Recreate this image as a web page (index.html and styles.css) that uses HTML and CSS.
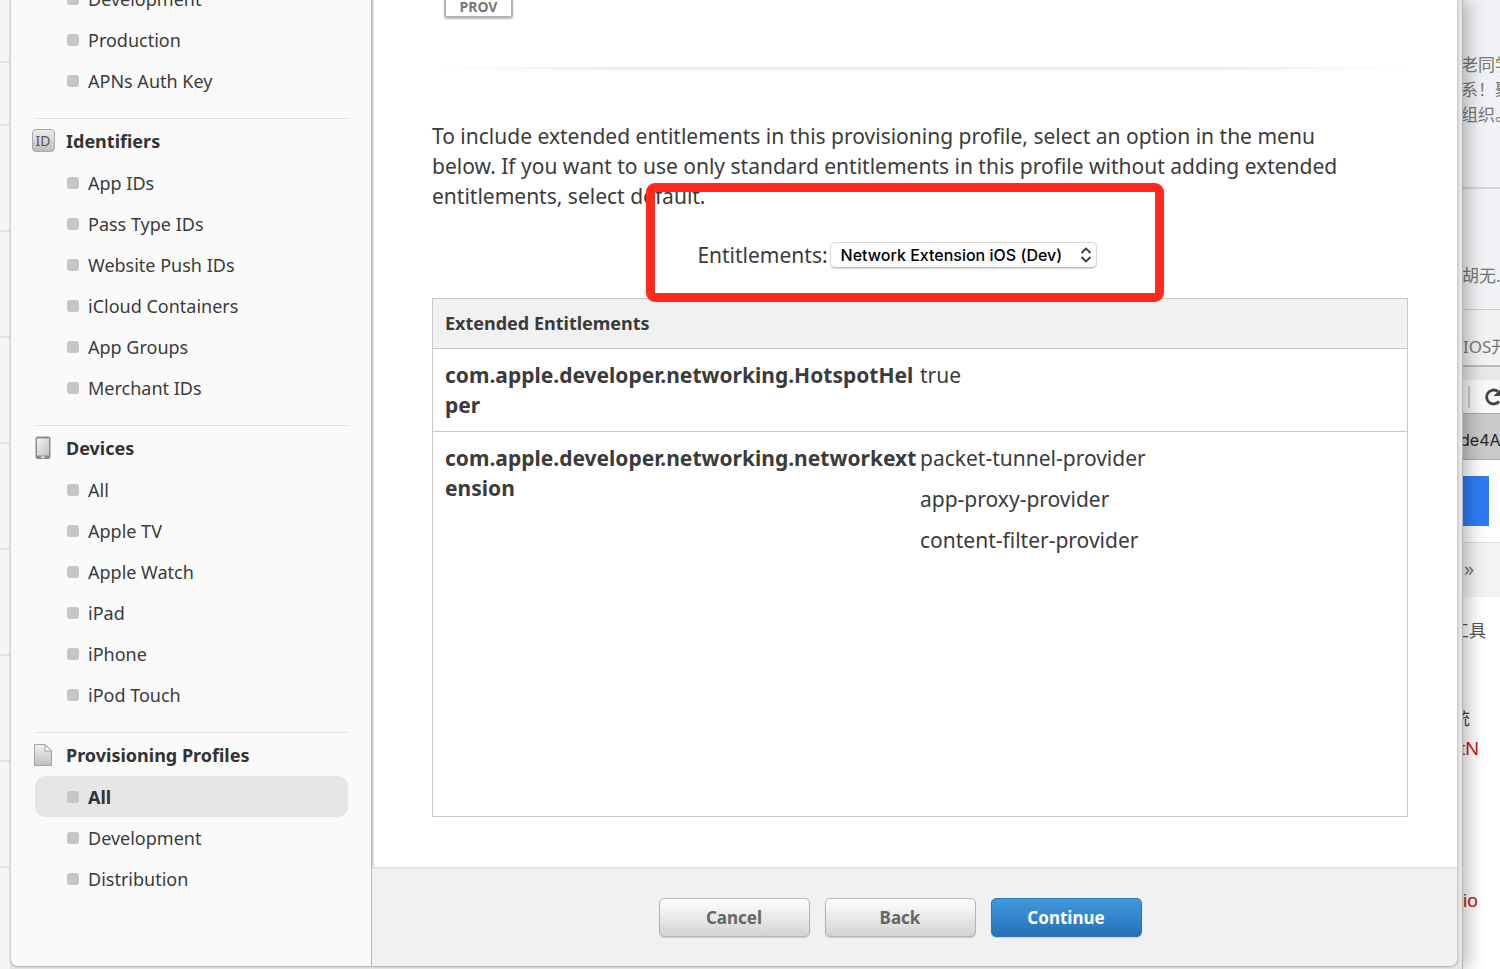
FILE: index.html
```html
<!DOCTYPE html>
<html lang="en">
<head>
<meta charset="utf-8">
<title>Provisioning Profiles</title>
<link rel="stylesheet" href="styles.css">
</head>
<body>
<div class="desktop">
  <div class="browser">
    <div class="rail"><i class="short"></i><i class="short"></i><i></i><i></i><i></i><i></i><i></i><i></i><i></i></div>
    <div class="card">
      <nav class="sidebar">
        <section class="group first">
          <ul>
            <li><a href="#">Development</a></li>
            <li><a href="#">Production</a></li>
            <li><a href="#">APNs Auth Key</a></li>
          </ul>
        </section>
        <section class="group">
          <h2><span class="icon"><span class="id-badge">ID</span></span>Identifiers</h2>
          <ul>
            <li><a href="#">App IDs</a></li>
            <li><a href="#">Pass Type IDs</a></li>
            <li><a href="#">Website Push IDs</a></li>
            <li><a href="#">iCloud Containers</a></li>
            <li><a href="#">App Groups</a></li>
            <li><a href="#">Merchant IDs</a></li>
          </ul>
        </section>
        <section class="group">
          <h2><span class="icon"><svg width="16" height="24" viewBox="0 0 16 24" aria-hidden="true"><defs><linearGradient id="g1" x1="0" y1="0" x2="1" y2="1"><stop offset="0" stop-color="#f4f4f4"/><stop offset="1" stop-color="#c2c2c4"/></linearGradient></defs><rect x=".5" y=".5" width="15" height="22.500" rx="2" fill="#8b8b8d"/><rect x="2" y="2.500" width="12" height="17" fill="url(#g1)"/><rect x="6" y="20.500" width="4" height="1.500" fill="#e8e8e8"/></svg></span>Devices</h2>
          <ul>
            <li><a href="#">All</a></li>
            <li><a href="#">Apple TV</a></li>
            <li><a href="#">Apple Watch</a></li>
            <li><a href="#">iPad</a></li>
            <li><a href="#">iPhone</a></li>
            <li><a href="#">iPod Touch</a></li>
          </ul>
        </section>
        <section class="group">
          <h2><span class="icon"><svg width="18" height="22" viewBox="0 0 18 22" aria-hidden="true"><defs><linearGradient id="g2" x1="0" y1="0" x2="0" y2="1"><stop offset="0" stop-color="#f0f0f0"/><stop offset="1" stop-color="#bfc0c2"/></linearGradient></defs><path d="M.5 .5H11L17.500 7V21.500H.5Z" fill="url(#g2)" stroke="#a2a3a5"/><path d="M11 .8V7H17.300Z" fill="#fff" stroke="#a2a3a5" stroke-linejoin="round"/></svg></span>Provisioning Profiles</h2>
          <ul>
            <li><a href="#" class="current">All</a></li>
            <li><a href="#">Development</a></li>
            <li><a href="#">Distribution</a></li>
          </ul>
        </section>
      </nav>
      <main class="main">
        <div class="content">
          <div class="prov">PROV</div>
          <div class="divider"></div>
          <p class="intro">To include extended entitlements in this provisioning profile, select an option in the menu<br>below. If you want to use only standard entitlements in this profile without adding extended<br>entitlements, select default.</p>
          <div class="field">
            <div class="field-inner">
              <label for="ent">Entitlements:</label>
              <span class="select"><select id="ent"><option>Network Extension iOS (Dev)</option></select><svg width="12" height="16" viewBox="0 0 12 16" aria-hidden="true"><path d="M1.500 6L6 1.500L10.500 6M1.500 10L6 14.500L10.500 10" fill="none" stroke="#3c3c3c" stroke-width="1.800"/></svg></span>
              <div class="highlight"></div>
            </div>
          </div>
          <div class="panel">
            <table>
              <thead><tr><th colspan="2">Extended Entitlements</th></tr></thead>
              <tbody>
                <tr><th scope="row">com.apple.developer.networking.HotspotHel<wbr>per</th><td><p>true</p></td></tr>
                <tr><th scope="row">com.apple.developer.networking.networkext<wbr>ension</th><td><p>packet-tunnel-provider</p><p>app-proxy-provider</p><p>content-filter-provider</p></td></tr>
              </tbody>
            </table>
          </div>
        </div>
        <footer class="actions">
          <button type="button">Cancel</button>
          <button type="button">Back</button>
          <button type="button" class="primary">Continue</button>
        </footer>
      </main>
    </div>
  </div>
  <aside class="behind">
    <div class="notes"><p>老同学<br>系！聚<br>组织。</p></div>
    <div class="notes second"><p>胡无...</p></div>
    <div class="tab">IOS开</div>
    <div class="gap"></div>
    <div class="tools"><i></i><svg width="20" height="20" viewBox="0 0 20 20" aria-hidden="true"><path d="M15 14.500A7 7 0 1 1 14 4.500" fill="none" stroke="#444" stroke-width="2.800"/><path d="M17.500 1V9H9.500Z" fill="#444"/></svg></div>
    <div class="bookmark"><span>de4Ap</span></div>
    <div class="banner"><div></div></div>
    <div class="more">»</div>
    <div class="results">
      <p class="r1"><span>工具</span></p>
      <p class="r2"><span>统</span></p>
      <p class="r3"><span>tN</span></p>
      <p class="r4"><span>io</span></p>
    </div>
  </aside>
</div>
</body>
</html>
```
FILE: styles.css
```css
* { box-sizing: border-box; }
body { margin: 0; background: #fff; color: #3b3b3b; font-family: "Noto Sans", "Noto Sans CJK SC", sans-serif; }
h2, ul, p { margin: 0; padding: 0; }
.desktop { display: grid; grid-template-columns: minmax(0, 1fr) 37px; height: 100vh; overflow: hidden; }
.browser { position: relative; z-index: 1; display: grid; grid-template-columns: 10px minmax(0, 1fr); padding: 0 4px 3px 0; background: #e6e6e6; border-right: 1px solid #b4b4b4; box-shadow: 4px 0 18px rgba(0, 0, 0, .3); min-height: 0; }

.rail { background: #f5f5f5; overflow: hidden; margin-bottom: -3px; }
.rail i { display: block; height: 106px; border-bottom: 2px solid #e4e4e4; }
.rail i.short { height: 63px; }

.card { display: grid; grid-template-columns: 361px minmax(0, 1fr); min-height: 0; border-left: 1px solid #d4d4d4; border-right: 1px solid #d0d0d0; border-radius: 0 0 8px 8px; overflow: hidden; background: #fff; box-shadow: 0 1px 2px #aaa; }
.sidebar { background: #fafafa; padding: 0 23px 0 24px; border-right: 1px solid #bbb; overflow: hidden; box-shadow: 1px 0 2px rgba(0, 0, 0, .3); }
.group { border-top: 1px solid #e3e3e3; padding: 1px 0 17px; }
.group.first { border: 0; margin-top: -24px; }
.group h2 { display: flex; align-items: center; height: 41px; font-size: 18px; font-weight: 700; color: #333; }
.icon { display: flex; justify-content: center; width: 24px; margin: 0 11px 0 -4px; }
.id-badge { width: 23px; height: 23px; border: 1px solid #a8a8a8; border-radius: 4px; background: linear-gradient(#ececec, #bdbdbd); font-size: 14px; line-height: 21px; font-weight: 400; text-align: center; color: #555; }
.group ul { list-style: none; padding-top: 1px; }
.group a { display: flex; align-items: center; gap: 9px; height: 41px; padding-left: 32px; border-radius: 10px; font-size: 18px; color: #3b3b3b; text-decoration: none; }
.group a::before { content: ""; width: 12px; height: 12px; border-radius: 3px; background: #c6c6c8; }
.group a.current { background: #e6e6e6; font-weight: 700; color: #333; }

.main { display: flex; flex-direction: column; min-width: 0; min-height: 0; }
.content { flex: 1; display: flex; flex-direction: column; min-height: 0; padding: 0 49px 50px 60px; }
.prov { width: 69px; height: 18px; margin-left: 12px; border: 2px solid #b5b5b5; border-top: 0; border-radius: 0 0 3px 3px; box-shadow: 0 1px 2px #bbb; font-size: 14px; font-weight: 700; line-height: 13px; text-align: center; color: #777; }
.divider { height: 5px; margin: 49px 0; background: linear-gradient(90deg, #fff, transparent 20% 80%, #fff), linear-gradient(#e6e6e6, #fff); }
.intro { font-size: 21px; line-height: 30px; white-space: nowrap; }
.field { display: flex; justify-content: center; padding: 29px 46px 28px 0; }
.field-inner { position: relative; display: flex; align-items: center; gap: 2px; font-size: 21px; line-height: 30px; }
.select { position: relative; display: flex; align-items: center; }
.select select { appearance: none; width: 267px; height: 26px; padding: 0 10px; border: 1px solid #d9d9d9; border-bottom-color: #bbb; border-radius: 5px; background: #fff; box-shadow: 0 1px 1px #ddd; font: 500 16px Inter, sans-serif; color: #000; }
.select svg { position: absolute; right: 5px; }
.highlight { position: absolute; inset: -57px -67px -32px -51px; border: 9px solid #ff2a1d; border-radius: 9px; pointer-events: none; }

.panel { flex: 1; min-height: 0; border: 1px solid #c8c8c8; }
.panel table { width: 100%; border-collapse: collapse; table-layout: fixed; text-align: left; }
.panel thead th { height: 49px; padding: 0 12px; background: #f1f1f1; border-bottom: 1px solid #c8c8c8; font-size: 18px; }
.panel tbody th, .panel tbody td { padding: 11px 0; vertical-align: top; font-size: 21px; line-height: 30px; }
.panel tbody th { padding-left: 12px; white-space: normal; }
.panel tbody tr + tr { border-top: 1px solid #c8c8c8; }
.panel p + p { margin-top: 11px; }

.actions { display: flex; justify-content: center; align-items: center; gap: 15px; height: 99px; padding-right: 29px; background: #f1f1f1; border-top: 2px solid #e2e2e2; }
.actions button { width: 151px; height: 39px; border: 1px solid #b5b5b5; border-radius: 5px; background: linear-gradient(#fff, #d2d2d2); box-shadow: 0 1px 1px #ccc; font: 700 17px "Noto Sans", sans-serif; color: #666; }
.actions .primary { border-color: #2a78b8; background: linear-gradient(#3e99de, #2870b8); color: #fff; }

.behind { overflow: hidden; background: #fff; font-size: 17px; color: #777; white-space: nowrap; }
.notes { height: 189px; padding-top: 52px; background: #f1f2f5; border-bottom: 2px solid #d5d5d8; line-height: 25px; }
.notes p { margin-left: -2px; }
.notes.second { height: 121px; padding-top: 74px; border-bottom: 1px solid #ccc; }
.notes.second p { margin-left: -1px; }
.tab { height: 57px; padding-top: 9px; background: #f2f2f2; border-bottom: 2px solid #bbb; line-height: 56px; }
.gap { height: 13px; background: #e8e8e8; }
.tools { display: flex; align-items: center; gap: 14px; height: 33px; padding-left: 5px; background: #f8f8f8; }
.tools i { flex: none; width: 2px; height: 22px; background: #ccc; }
.tools svg { flex: none; }
.bookmark { height: 47px; padding-top: 3px; background: #c9c9c9; border-top: 1px solid #aaa; border-bottom: 1px solid #aaa; line-height: 46px; color: #222; font-family: Inter, sans-serif; font-size: 16px; }
.bookmark span, .r3 span { margin-left: -3px; }
.banner { height: 83px; padding: 16px 11px 16px 0; background: #fdfdfd; border-bottom: 1px solid #ddd; }
.banner div { height: 50px; background: #2f7bf6; }
.more { height: 54px; padding-left: 1px; background: #f3f3f3; line-height: 52px; font-size: 20px; }
.results { line-height: 30px; color: #555; }
.r1 { padding-top: 19px; }
.r1 span { margin-left: -11px; }
.r2 { padding-top: 58px; color: #444; }
.r2 span { margin-left: -10px; }
.r3, .r4 { font-family: "Liberation Sans", sans-serif; font-size: 19px; color: #c4161c; }
.r4 { padding-top: 122px; }
```
